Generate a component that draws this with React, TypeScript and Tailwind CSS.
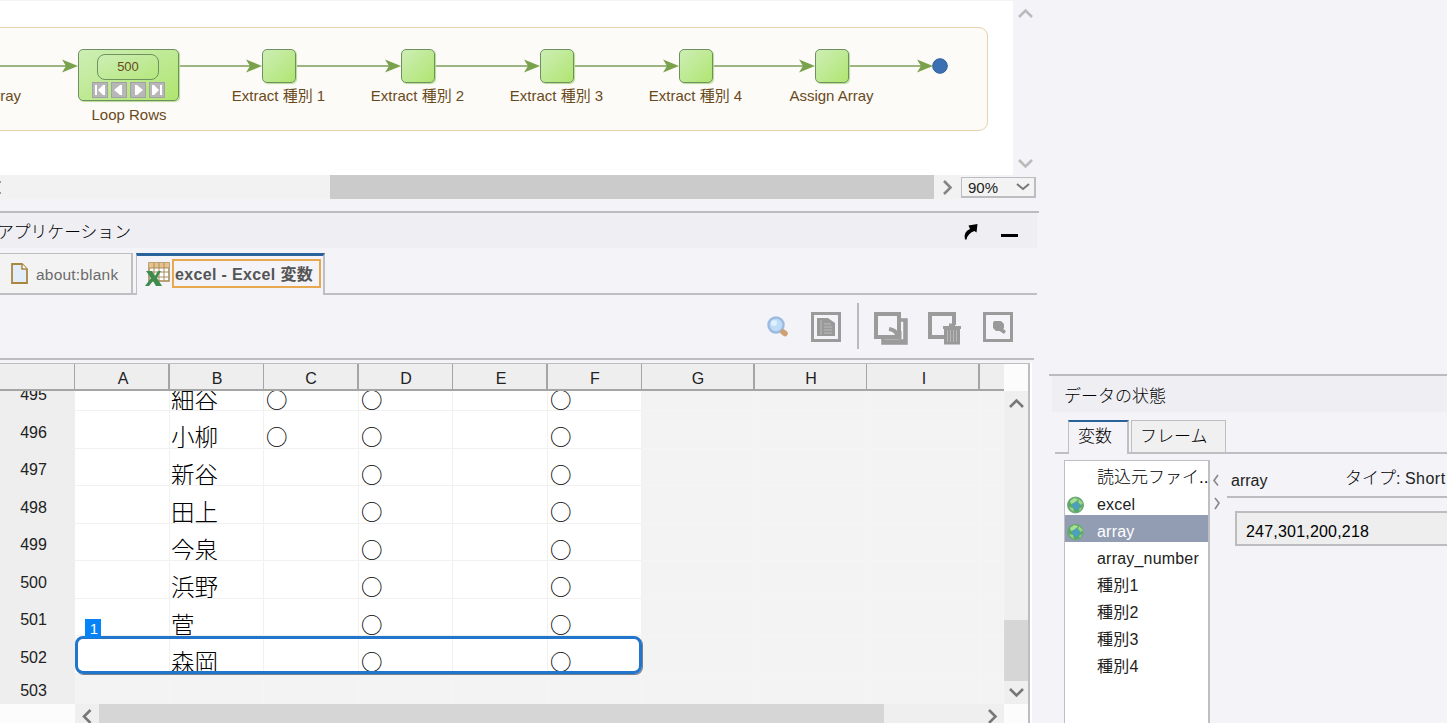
import type { ReactNode } from "react";

const steps = [
	{ left: 262, label: "Extract 種別 1" },
	{ left: 401, label: "Extract 種別 2" },
	{ left: 540, label: "Extract 種別 3" },
	{ left: 679, label: "Extract 種別 4" },
	{ left: 815, label: "Assign Array" },
];

const arrows = [
	{ from: 0, to: 78 },
	{ from: 179, to: 262 },
	{ from: 296, to: 401 },
	{ from: 435, to: 540 },
	{ from: 574, to: 679 },
	{ from: 713, to: 815 },
	{ from: 849, to: 933 },
];

const columns = ["A", "B", "C", "D", "E", "F", "G", "H", "I", ""];

const rows = [
	{ id: 495, name: "細谷", c: true },
	{ id: 496, name: "小柳", c: true },
	{ id: 497, name: "新谷", c: false },
	{ id: 498, name: "田上", c: false },
	{ id: 499, name: "今泉", c: false },
	{ id: 500, name: "浜野", c: false },
	{ id: 501, name: "菅", c: false },
	{ id: 502, name: "森岡", c: false },
];

const variables = ["読込元ファイ..", "excel", "array", "array_number", "種別1", "種別2", "種別3", "種別4"];

const GRID_COLS = "grid grid-cols-[75px_95px_94px_95px_94px_95px_94px_113px_112px_113px_24px]";

function Chevron({ dir, className = "" }: { dir: "up" | "down" | "left" | "right"; className?: string }) {
	const d = {
		up: "M2 11 L8.500 4.500 L15 11",
		down: "M2 5 L8.500 11.500 L15 5",
		left: "M11.500 2 L5 8.500 L11.500 15",
		right: "M5 2 L11.500 8.500 L5 15",
	}[dir];
	return (
		<svg className={className} width="17" height="17" viewBox="0 0 17 17" fill="none" stroke="currentColor" strokeWidth="2.6">
			<path d={d} />
		</svg>
	);
}

function Workflow() {
	return (
		<div className="relative h-[174px] w-[1013px] overflow-hidden bg-white">
			<div className="absolute -left-4 top-[26px] h-[104px] w-[1004px] rounded-[9px] border border-[#e6d2ac] bg-[#fcfbf7]" />
			<svg className="absolute left-0 top-0" width="1013" height="174">
				{arrows.map((a) => (
					<g key={a.to}>
						<path d={`M${a.from} 65 H${a.to - 8}`} stroke="#7c9e5c" strokeWidth="1.4" />
						<path d={`M${a.to} 65 L${a.to - 16} 58.500 L${a.to - 12} 65 L${a.to - 16} 71.500 Z`} fill="#7aa24c" />
					</g>
				))}
				<circle cx="940" cy="65" r="7.300" fill="#3b70b2" stroke="#2f5f9c" />
			</svg>
			<div className="absolute -left-[21px] top-[86px] w-[42px] text-right text-[15px] leading-[18px] text-[#6a4a1c]">Array</div>
			<div className="absolute left-[78px] top-[48px] flex h-[52px] w-[101px] flex-col items-center rounded-[5px] border-[1.5px] border-[#6f8f62] bg-linear-to-br from-[#cdeeb4] to-[#b0e56f] pt-1 shadow-[1px_1px_1px_#b5dd90]">
				<div className="-ml-px flex h-[26px] w-[62px] items-center justify-center rounded-[8px] border border-[#70925f] bg-linear-to-br from-[#cdeeb4] to-[#b5e77c] text-[13px] text-[#6a4a1c]">500</div>
				<svg className="mt-0.5" width="73" height="16" viewBox="0 0 73 16">
					{[0, 19, 38, 57].map((x) => (
						<rect key={x} x={x + 0.5} y="0.500" width="15" height="15" fill="#b7b7b7" stroke="#a2a2a2" />
					))}
					<path d="M3 3h2v10H3z M13 3v10L11 13 6 8 11 3z M30 3v10H28L22 8 28 3z M43 3v10H45L51 8 45 3z M60 3v10H62L67 8 62 3z M68 3h2v10h-2z" fill="#fff" />
				</svg>
			</div>
			<div className="absolute left-[69px] top-[105px] w-[120px] text-center text-[15px] leading-[18px] text-[#6a4a1c]">Loop Rows</div>
			{steps.map((s) => (
				<div key={s.label} className="absolute top-[48px] flex w-[140px] flex-col items-center" style={{ left: s.left - 53 }}>
					<div className="h-[34px] w-[34px] rounded-[5px] border-[1.5px] border-[#6f8f62] bg-linear-to-br from-[#cdeeb4] to-[#b0e56f] shadow-[1px_1px_1px_#b5dd90]" />
					<div className="-ml-px mt-1 whitespace-nowrap text-[15px] leading-[18px] text-[#6a4a1c]">{s.label}</div>
				</div>
			))}
		</div>
	);
}

function ToolIcon({ children, width = 38 }: { children: ReactNode; width?: number }) {
	return (
		<svg width={width} height="38" viewBox={`0 0 ${width} 38`} fill="none" stroke="#9b9b9b">
			{children}
		</svg>
	);
}

function Toolbar() {
	return (
		<div className="flex h-[63px] items-center pb-px">
			<div className="w-[762px]" />
			<ToolIcon width={44}>
				<circle cx="14" cy="18" r="7.500" fill="#bddcf8" stroke="#9dbbe0" strokeWidth="2.500" />
				<circle cx="12" cy="16" r="3" fill="#dff0ff" stroke="none" />
				<path d="M21 25l2 1.500" stroke="#cfa072" strokeWidth="5.500" strokeLinecap="round" />
			</ToolIcon>
			<ToolIcon width={51}>
				<path d="M6.500 6.500h27v27h-27z" strokeWidth="3" />
				<path d="M11 11h11l7 5v13H11z" fill="#999" stroke="none" />
				<path d="M15 13v15M18 17h7M18 20h8M18 23h8M18 26h8" stroke="#bbb" />
			</ToolIcon>
			<div className="h-[46px] w-0.5 bg-[#b9b9be]" />
			<ToolIcon width={64}>
				<path d="M17 7h23v23H17z" strokeWidth="4" />
				<path d="M42 13h5v23H24v-5M46 13v21H24" strokeWidth="3.500" />
				<path d="M30 22q7 1 8 6" strokeWidth="4" />
				<path d="M32 31l10-7v8z" fill="#9b9b9b" />
			</ToolIcon>
			<ToolIcon width={50}>
				<path d="M31 18V7H7v23h14" strokeWidth="4" />
				<path d="M21 21h16v16.500H21z" fill="#999" stroke="none" />
				<path d="M20 20.500h18M26 18h6" strokeWidth="3" />
				<path d="M24.500 23v12M27.500 23v12M30.500 23v12M33.500 23v12" stroke="#b8b8b8" />
			</ToolIcon>
			<ToolIcon width={46}>
				<path d="M11.500 6.500h27v27h-27z" strokeWidth="3" />
				<path d="M21 14h7l3 3v4l-2 3h-6l-3-3v-5z" fill="#999" stroke="none" />
				<path d="M27 22l5 3.500" stroke="#999" strokeWidth="3.500" />
			</ToolIcon>
		</div>
	);
}

function Sheet() {
	return (
		<div className="mt-[3px] flex h-[360px] w-[1032px] border-r-2 border-white">
			<div className="flex w-[1030px] border-r-2 border-t border-[#bdbdbf] bg-[#fcfcfc]">
				<div className="w-[1004px] overflow-hidden">
					<div className={`${GRID_COLS} h-[27px] border-b-2 border-[#a5a5a5] bg-[#eee] text-base text-[#222]`}>
						<div className="border-r border-[#a5a5a5]" />
						{columns.map((c, i) => (
							<div key={i} className={`flex items-center justify-center border-[#a5a5a5] pt-[3px] ${i % 4 === 0 ? "pl-[3px]" : "pl-px"} ${i === 9 ? "" : i % 2 ? "border-r" : "border-r-2"}`}>{c}</div>
						))}
					</div>
					<div className="relative h-[313px] overflow-hidden bg-[#f3f3f3]">
						<div className="-mt-[17.500px]">
							{rows.map((r) => (
								<div key={r.id} className={`${GRID_COLS} h-[37.500px]`}>
									<div className="flex items-center justify-center bg-[#eee] pr-2 pt-1.5 text-base text-[#222]">{r.id}</div>
									{["", r.name, r.c ? "○" : "", "○", "", "○"].map((v, i) => (
										<div
											key={i}
											className={`h-[37.500px] overflow-hidden border-b border-r border-[#f1f1f1] bg-white pl-[2px] font-['Noto_Sans_CJK_JP'] text-black ${i === 1 ? "-indent-px text-[23.500px] font-light leading-[50px]" : "text-[21.500px] font-normal leading-[50px]"}`}
										>
											{v}
										</div>
									))}
									{[6, 7, 8, 9].map((i) => (
										<div key={i} className="border-b border-r border-[#f5f5f5]" />
									))}
								</div>
							))}
							<div className={`${GRID_COLS} h-[31px]`}>
								<div className="flex items-center justify-center bg-[#eee] pr-2 pt-1 text-base text-[#222]">503</div>
								{columns.map((_, i) => (
									<div key={i} className="border-r border-[#f5f5f5]" />
								))}
							</div>
						</div>
						{/* marker around the row the loop is on */}
						<div className="absolute left-[75px] top-[245px] h-[38px] w-[567px] rounded-[8px] border-[3.500px] border-[#2176cc] shadow-[1px_1px_0_#75808e]" />
						<div className="absolute left-[85px] top-[228px] flex h-[19px] w-4 items-center justify-center bg-[#0883f7] pl-0.5 pt-px text-[15px] text-white">1</div>
					</div>
					<div className="flex h-[24px] bg-[#efefef]">
						<div className="w-[75px] bg-[#fcfcfc]" />
						<div className="w-6 pl-1 pt-1 text-[#777]"><Chevron dir="left" /></div>
						<div className="w-[785px] bg-[#d6d6d6]" />
						<div className="ml-auto mr-[3px] pt-1 text-[#777]"><Chevron dir="right" /></div>
					</div>
				</div>
				<div className="mt-[27px] flex h-[313px] w-6 flex-col items-center bg-[#efefef] text-[#777]">
					<Chevron dir="up" className="mt-[5px]" />
					<div className="mt-auto h-[61px] w-full bg-[#d6d6d6]" />
					<Chevron dir="down" className="mb-[3px] mt-[3px]" />
				</div>
			</div>
		</div>
	);
}

function Globe() {
	return (
		<svg width="18" height="18" viewBox="0 0 18 18">
			<circle cx="8.500" cy="9" r="8" fill="#5aa86c" stroke="#78a883" />
			<path d="M3 5l4-3 4 1-2 3-5 2z" fill="#a8e08e" />
			<path d="M5 9l4-4 4 4-2 5-4-1z" fill="#4b9fc0" />
			<path d="M12 3l4 4-2 2-3-3zM2 11l4 1 1 4-3-2zM12 13l3-2-2 4z" fill="#98d68a" />
		</svg>
	);
}

function ApplicationPanel() {
	return (
		<>
			<div className="mt-3 h-0.5 w-[1039px] bg-[#bcbcbe]" />
			<div className="flex h-[35px] w-[1037px] items-center bg-[#eeeef3]">
				<span className="-ml-[3px] pt-[4px] text-[16.800px] font-light text-black">アプリケーション</span>
				<svg className="ml-auto" width="18" height="18" viewBox="0 0 18 18">
					<path d="M3 17.500Q1 10 8 7L6.500 3.500L15.500 2L14.500 10.500L12.500 9Q6 11 4.500 17.500z" fill="#000" />
				</svg>
				<div className="ml-[21px] mr-[19px] mt-2.5 h-[3px] w-[17px] bg-black" />
			</div>
			<div className="flex h-[47px] w-[1037px] pt-[5px]">
				<div className="flex h-[42px] w-[133px] items-center border-b-2 border-r-2 border-t border-[#bfbfc3] bg-[#f3f3f4] pl-[11px] text-[15.500px] text-[#6b6b6b]">
					<svg width="18" height="22" viewBox="0 0 18 22">
						<path d="M1 1h10l5 5v14H1z" fill="#e2ecfa" stroke="#aa8740" strokeWidth="1.800" />
						<path d="M11 1v5h5" fill="#fff" stroke="#aa8740" strokeWidth="1.500" />
					</svg>
					<span className="ml-[7px] pt-0.5 tracking-[0.2px]">about:blank</span>
				</div>
				<div className="w-[3px] border-b-2 border-[#bfbfc3]" />
				<div className="flex h-[42px] w-[189px] items-center border-l border-r-2 border-t-[3px] border-[#bfbfc3] border-t-[#2a639b] pb-1 pl-2">
					<svg className="mt-px" width="25" height="25" viewBox="0 0 25 25">
						<path d="M4 1h20v18H4z" fill="#fff" stroke="#a88750" strokeWidth="1.500" />
						<path d="M4 1h20v5H4z" fill="#e7c28d" />
						<path d="M4 6h20M4 10h20M4 15h20M9 1v18M14 1v18M19 1v18" stroke="#a88d60" />
						<path d="M1 9h6l3 5 3-5h3l-4 7 5 8h-6l-3-5-4 5H0l6-8z" fill="#3f8a4d" />
					</svg>
					<div className="ml-[2px] flex h-[29px] w-[149px] items-center border-2 border-[#e6a850] pl-px pt-0.5 text-[16px] font-bold tracking-[0.35px] whitespace-nowrap text-[#555]">excel - Excel 変数</div>
				</div>
				<div className="flex-1 border-b-2 border-[#bfbfc3]" />
			</div>
			<Toolbar />
			<div className="h-0.5 w-[1034px] bg-[#bdbdc0]" />
			<Sheet />
		</>
	);
}

function DataPanel() {
	return (
		<div className="flex flex-1 flex-col overflow-hidden pt-[374px] text-base text-[#222]">
			<div className="ml-[10px] h-0.5 shrink-0 bg-[#bcbcbe]" />
			<div className="ml-[13px] flex h-9 shrink-0 items-center bg-[#eeeef3] pl-3 pt-[5px] text-[17px] font-light text-black">データの状態</div>
			<div className="ml-4 flex h-[42px] shrink-0 pt-2">
				<div className="w-[13px] border-b-2 border-[#bfbfc3]" />
				<div className="w-[61px] border-l border-r-2 border-t-2 border-[#bfbfc3] border-t-[#2a639b] pl-[9px] text-[17px] font-light leading-[29px] text-black">変数</div>
				<div className="w-[2px] border-b-2 border-[#bfbfc3]" />
				<div className="w-[95px] border border-b-2 border-[#bfbfc3] bg-[#f0f0f1] pl-2 text-[17px] font-light leading-[31px] text-black">フレーム</div>
				<div className="flex-1 border-b-2 border-[#bfbfc3]" />
			</div>
			<div className="flex flex-1 pl-[25px]">
				<div className="mt-1.5 w-[146px] shrink-0 border-l border-r-2 border-t border-[#bfbfc3] bg-white">
					{variables.map((v, i) => (
						<div key={v} className={`flex h-[27px] items-center overflow-hidden whitespace-nowrap pt-1.5 ${i === 2 ? "bg-[#929db4] text-white" : ""}`}>
							<div className="w-8 shrink-0 pl-0.5">{(i === 1 || i === 2) && <Globe />}</div>
							<span className={i === 0 ? "text-[17px] font-light leading-[24px] text-black" : "leading-[24px] tracking-[0.2px]"}>{v}</span>
						</div>
					))}
				</div>
				<div className="flex w-[17px] shrink-0 flex-col items-start pt-[18px] text-[#888]">
					<svg width="11" height="48" viewBox="0 0 11 48" fill="none" stroke="currentColor" strokeWidth="1.600">
						<path d="M8 3L4 8.500l4 5M5 26l4 5-4 6" />
					</svg>
				</div>
				<div className="flex flex-1 flex-col">
					<div className="flex h-[44px] border-b-2 border-[#bdbdc0] pl-1 pt-[12px]">
						<span className="w-[114px] pt-[3px]">array</span>
						<span className="whitespace-nowrap"><span className="text-[17px] font-light text-black">タイプ</span>: <span className="tracking-[0.5px]">Short</span></span>
					</div>
					<div className="ml-2 mt-[13px] flex h-[35px] items-center border-2 border-r-0 border-[#bdbdc0] bg-[#eee] pl-[9px] pt-[6px] tracking-[0.2px] text-black">247,301,200,218</div>
				</div>
			</div>
		</div>
	);
}

export default function App() {
	return (
		<div className="flex h-[723px] w-[1447px] overflow-hidden bg-[#f3f3f8] font-['Liberation_Sans','Noto_Sans_CJK_JP',sans-serif]">
			<div className="w-[1039px] shrink-0 pt-px">
				<div className="flex">
					<Workflow />
					<div className="flex h-[174px] w-6 flex-col items-center justify-between pb-[3px] pt-[5px] text-[#bbb]">
						<Chevron dir="up" />
						<Chevron dir="down" />
					</div>
				</div>
				<div className="flex h-6 items-center">
					<div className="flex h-6 w-[961px] items-center bg-[#f2f2f2]">
						<div className="h-[13px] w-px border-y-2 border-[#999]" />
						<div className="ml-[329px] h-6 w-[604px] bg-[#cbcbcb]" />
						<Chevron dir="right" className="ml-[5px] text-[#858585]" />
					</div>
					<div className="flex h-[21px] w-[75px] items-center justify-between border border-b-2 border-r-2 border-[#bdbdbf] bg-[#f3f3f4] pl-1.5 pr-1 pt-[3px] text-[15px] text-[#222]">
						90%
						<svg className="-mt-0.5" width="14" height="10" viewBox="0 0 14 10" fill="none" stroke="#777" strokeWidth="2">
							<path d="M1 2l6 5 6-5" />
						</svg>
					</div>
				</div>
				<ApplicationPanel />
			</div>
			<DataPanel />
		</div>
	);
}
